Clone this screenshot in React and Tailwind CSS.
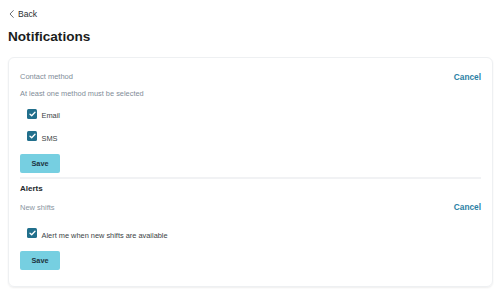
import React from 'react';

function CheckBox() {
  return (
    <span className="flex items-center justify-center w-[10px] h-[10px] rounded-[1.5px] bg-[#216f8c] shrink-0">
      <svg width="7" height="6" viewBox="0 0 7 6" fill="none">
        <path d="M1 3.2 L2.7 4.8 L6 1.2" stroke="white" strokeWidth="1.3" strokeLinecap="round" strokeLinejoin="round" />
      </svg>
    </span>
  );
}

function CheckRow({ label }) {
  return (
    <div className="flex items-start gap-[4.5px] pl-[7px]">
      <CheckBox />
      <span className="mt-[2.4px] leading-[10px] text-[7.4px] text-[#3a3f45]">{label}</span>
    </div>
  );
}

function SaveButton({ className }) {
  return (
    <button className={`w-[40px] h-[19px] rounded-[2px] bg-[#76cfe1] text-[7.3px] font-bold text-[#1d3442] leading-[19px] ${className}`}>
      Save
    </button>
  );
}

function CancelLink() {
  return <span className="text-[8.3px] font-bold text-[#2a81a5]">Cancel</span>;
}

export default function App() {
  return (
    <div className="w-[501px] h-[293px] bg-white px-[8px] font-['Liberation_Sans',Arial,sans-serif] overflow-hidden">
      {/* back link */}
      <div className="flex items-center h-[14px] mt-[7px] gap-[4px] pl-[1px]">
        <svg width="5" height="8" viewBox="0 0 5 8" fill="none">
          <path d="M4.3 0.6 L1 4 L4.3 7.4" stroke="#5b6067" strokeWidth="0.9" strokeLinecap="round" strokeLinejoin="round" />
        </svg>
        <span className="text-[8.6px] text-[#2b2f33]">Back</span>
      </div>

      <h1 className="mt-[7px] h-[18px] leading-[18px] text-[13.6px] font-bold text-[#1b1d20]">Notifications</h1>

      <div className="mt-[11px] h-[230px] rounded-[6px] border border-[#eef0f2] shadow-[0_1px_2px_rgba(0,0,0,0.07)] px-[11px] pt-[11px] flex flex-col">
        <div className="flex items-center justify-between h-[16px]">
          <span className="text-[7.5px] text-[#7f8c98]">Contact method</span>
          <CancelLink />
        </div>
        <div className="mt-[3px] h-[11px] leading-[11px] text-[7.4px] text-[#7f8c98]">At least one method must be selected</div>

        <div className="mt-[10px] flex flex-col gap-[10px]">
          <CheckRow label="Email" />
          <CheckRow label="SMS" />
        </div>

        <SaveButton className="mt-[10px]" />

        <div className="mt-[4px] h-[2px] bg-[#f1f2f4]" />

        <div className="mt-[4px] h-[12px] leading-[12px] text-[8px] font-bold text-[#24282c]">Alerts</div>

        <div className="mt-[4.5px] flex items-center justify-between h-[16px]">
          <span className="text-[7.5px] text-[#8a96a2]">New shifts</span>
          <CancelLink />
        </div>

        <div className="mt-[13px]">
          <CheckRow label="Alert me when new shifts are available" />
        </div>

        <SaveButton className="mt-[10.3px]" />
      </div>
    </div>
  );
}
